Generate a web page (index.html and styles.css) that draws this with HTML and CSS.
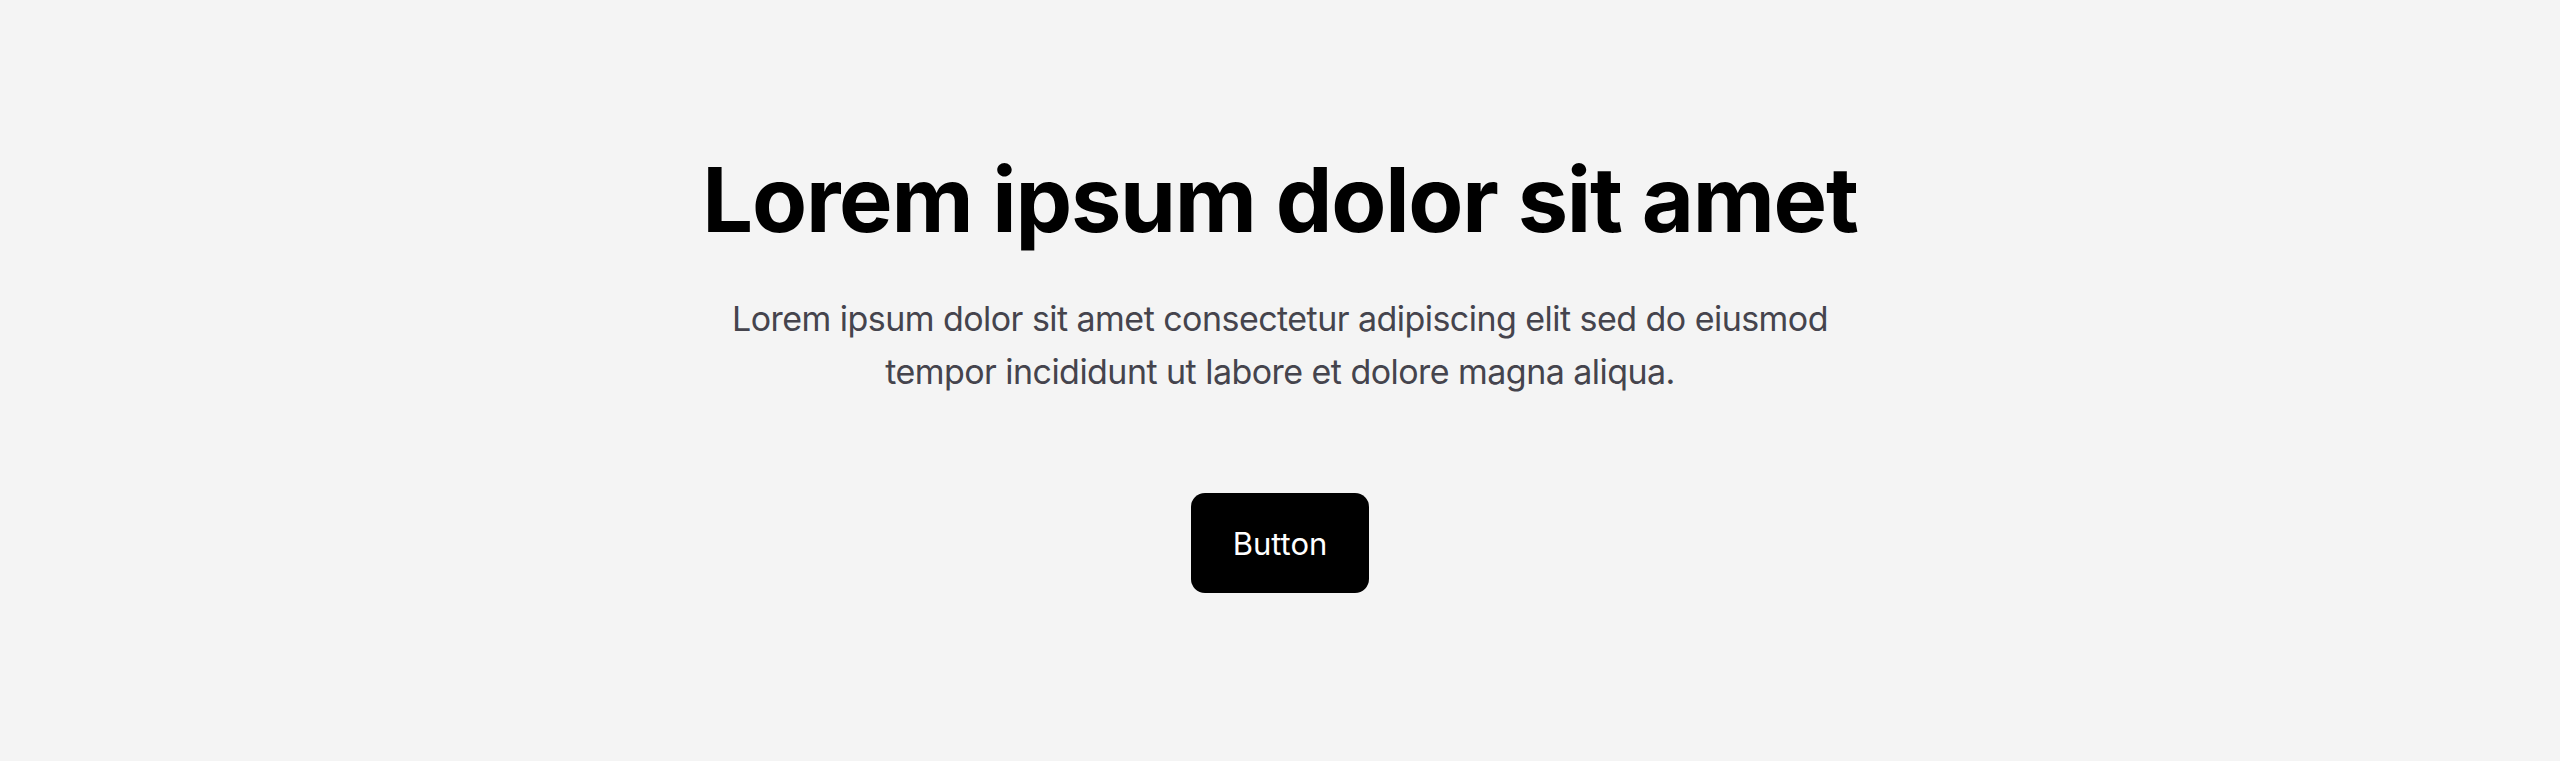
FILE: index.html
```html
<!DOCTYPE html>
<html lang="en">
<head>
<meta charset="utf-8">
<title>Hero</title>
<link rel="stylesheet" href="styles.css">
</head>
<body>
<section class="hero">
  <h1 class="hero-title">Lorem ipsum dolor sit amet</h1>
  <p class="hero-text">Lorem ipsum dolor sit amet consectetur adipiscing elit sed do eiusmod tempor incididunt ut labore et dolore magna aliqua.</p>
  <button class="hero-button" type="button">Button</button>
</section>
</body>
</html>
```

FILE: styles.css
```css
html, body {
  margin: 0;
  padding: 0;
  background: #f4f4f4;
}

body {
  font-family: Inter, "Noto Sans", sans-serif;
  min-height: 761px;
}

.hero {
  display: flex;
  flex-direction: column;
  align-items: center;
  text-align: center;
  padding-top: 146px;
}

.hero-title {
  margin: 0;
  font-size: 90px;
  line-height: 108px;
  font-weight: 700;
  letter-spacing: -0.014em;
  color: #000;
}

.hero-text {
  margin: 38px 0 0;
  max-width: 1110px;
  font-size: 34px;
  line-height: 53px;
  font-weight: 400;
  letter-spacing: -0.016em;
  color: #45444d;
}

.hero-button {
  margin-top: 95px;
  height: 100px;
  padding: 0 42px;
  border: 0;
  border-radius: 14px;
  background: #000;
  color: #fff;
  font-family: Inter, "Noto Sans", sans-serif;
  font-size: 31px;
  font-weight: 400;
  cursor: pointer;
}
```
